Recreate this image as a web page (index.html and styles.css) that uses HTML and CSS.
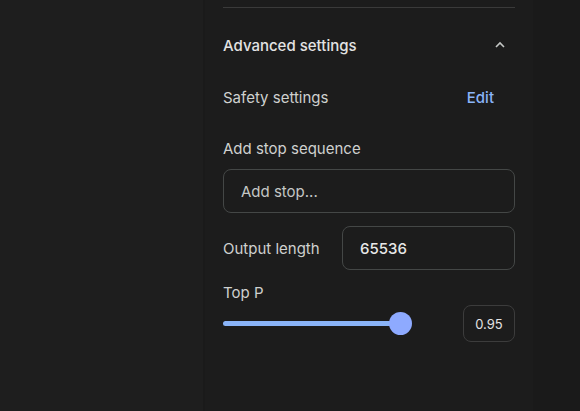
FILE: index.html
```html
<!DOCTYPE html>
<html>
<head>
<meta charset="utf-8">
<link rel="stylesheet" href="styles.css">
</head>
<body>
<div class="app">
  <div class="main"></div>
  <aside class="panel">
    <div class="divider"></div>
    <div class="section-head">
      <span class="section-title">Advanced settings</span>
      <svg class="chev" width="14" height="14" viewBox="0 0 14 14"><path d="M3 9 L7 5 L11 9" fill="none" stroke="#c4c7c5" stroke-width="1.6"/></svg>
    </div>
    <div class="row safety">
      <span class="label">Safety settings</span>
      <span class="link">Edit</span>
    </div>
    <div class="label stop-label">Add stop sequence</div>
    <div class="input stop-input"><span class="placeholder">Add stop...</span></div>
    <div class="row output">
      <span class="label">Output length</span>
      <div class="input out-input"><span class="value">65536</span></div>
    </div>
    <div class="label topp-label">Top P</div>
    <div class="row slider-row">
      <div class="slider">
        <div class="track"></div>
        <div class="thumb"></div>
      </div>
      <div class="num">0.95</div>
    </div>
  </aside>
  <div class="strip"></div>
</div>
</body>
</html>
```
FILE: styles.css
```css
* { box-sizing: border-box; }
html, body { margin: 0; height: 100%; }
body {
  background: #1e1e1e;
  font-family: Inter, "Noto Sans", sans-serif;
  color: #e3e3e3;
}
.app { display: flex; height: 411px; }
.main { width: 205px; background: #1e1e1e; border-right: 2px solid #1a1a1a; }
.panel {
  width: 328px;
  background: #1c1c1c;
  padding: 7px 18px 0 18px;
  display: flex;
  flex-direction: column;
}
.strip { flex: 1; background: #1a1a1a; }
.divider { height: 1px; background: #3a3a3a; }
.section-head {
  display: flex; align-items: center; justify-content: space-between;
  margin-top: 27px; height: 20px;
}
.section-title { font-size: 15px; font-weight: 500; color: #e3e3e3; }
.chev { margin-right: 8px; }
.row { display: flex; align-items: center; justify-content: space-between; }
.label { font-size: 15px; color: #cfd1cf; }
.safety { margin-top: 32px; height: 20px; }
.link { color: #8ab4f8; font-weight: 500; font-size: 15px; margin-right: 21px; }
.stop-label { margin-top: 32px; height: 20px; line-height: 20px; }
.input {
  border: 1px solid #444746;
  border-radius: 8px;
  height: 44px;
  display: flex; align-items: center;
  padding-left: 17px;
}
.stop-input { margin-top: 10px; }
.placeholder { font-size: 15px; color: #c4c7c5; }
.output { margin-top: 13px; }
.out-input { width: 173px; }
.value { font-size: 15px; font-weight: 500; color: #e8e8e8; }
.topp-label { margin-top: 13px; height: 20px; line-height: 20px; }
.slider-row { margin-top: 1px; }
.slider { position: relative; width: 190px; height: 36px; }
.track { position: absolute; left: 0; top: 16px; width: 178px; height: 5px; border-radius: 3px; background: #8ab4f8; }
.thumb { position: absolute; left: 166px; top: 7px; width: 23px; height: 23px; border-radius: 50%; background: #8eaaff; }
.num {
  width: 52px; height: 37px; margin-top: 1px;
  border: 1px solid #3c3c3c; border-radius: 8px;
  display: flex; align-items: center; justify-content: center;
  font-size: 13px; color: #e3e3e3;
}
```
